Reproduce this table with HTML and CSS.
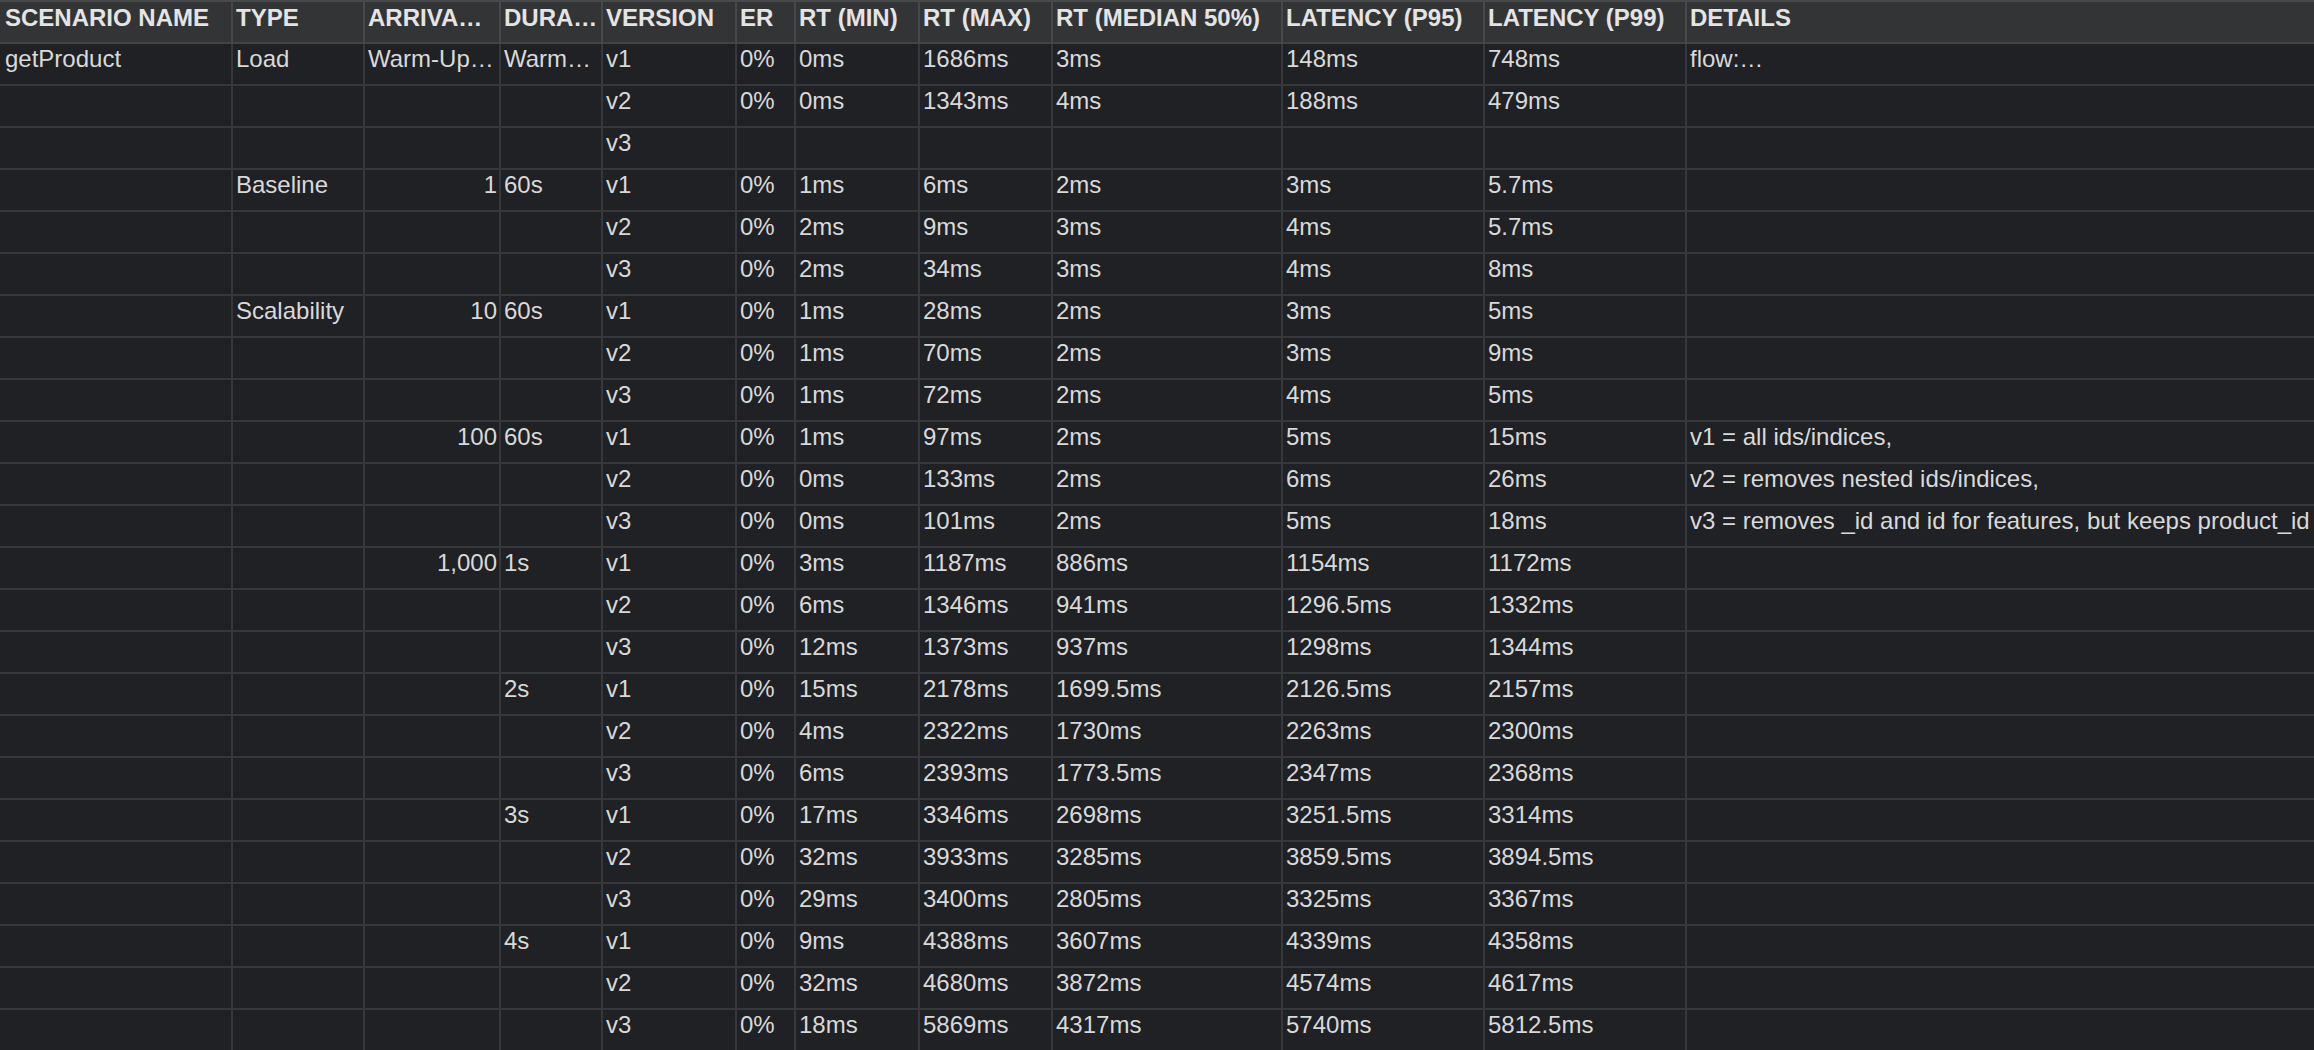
FILE: index.html
```html
<!DOCTYPE html>
<html lang="en">
<head>
<meta charset="utf-8">
<title>Load test results</title>
<link rel="stylesheet" href="styles.css">
</head>
<body>
<div class="sheet" role="table">
  <div class="c h">SCENARIO NAME</div><div class="c h">TYPE</div><div class="c h">ARRIVA…</div><div class="c h">DURA…</div><div class="c h">VERSION</div><div class="c h">ER</div><div class="c h">RT (MIN)</div><div class="c h">RT (MAX)</div><div class="c h">RT (MEDIAN 50%)</div><div class="c h">LATENCY (P95)</div><div class="c h">LATENCY (P99)</div><div class="c h last">DETAILS</div>

  <div class="c">getProduct</div><div class="c">Load</div><div class="c">Warm-Up…</div><div class="c">Warm…</div><div class="c">v1</div><div class="c">0%</div><div class="c">0ms</div><div class="c">1686ms</div><div class="c">3ms</div><div class="c">148ms</div><div class="c">748ms</div><div class="c last">flow:…</div>
  <div class="c"></div><div class="c"></div><div class="c"></div><div class="c"></div><div class="c">v2</div><div class="c">0%</div><div class="c">0ms</div><div class="c">1343ms</div><div class="c">4ms</div><div class="c">188ms</div><div class="c">479ms</div><div class="c last"></div>
  <div class="c"></div><div class="c"></div><div class="c"></div><div class="c"></div><div class="c">v3</div><div class="c"></div><div class="c"></div><div class="c"></div><div class="c"></div><div class="c"></div><div class="c"></div><div class="c last"></div>

  <div class="c"></div><div class="c">Baseline</div><div class="c num">1</div><div class="c">60s</div><div class="c">v1</div><div class="c">0%</div><div class="c">1ms</div><div class="c">6ms</div><div class="c">2ms</div><div class="c">3ms</div><div class="c">5.7ms</div><div class="c last"></div>
  <div class="c"></div><div class="c"></div><div class="c"></div><div class="c"></div><div class="c">v2</div><div class="c">0%</div><div class="c">2ms</div><div class="c">9ms</div><div class="c">3ms</div><div class="c">4ms</div><div class="c">5.7ms</div><div class="c last"></div>
  <div class="c"></div><div class="c"></div><div class="c"></div><div class="c"></div><div class="c">v3</div><div class="c">0%</div><div class="c">2ms</div><div class="c">34ms</div><div class="c">3ms</div><div class="c">4ms</div><div class="c">8ms</div><div class="c last"></div>

  <div class="c"></div><div class="c">Scalability</div><div class="c num">10</div><div class="c">60s</div><div class="c">v1</div><div class="c">0%</div><div class="c">1ms</div><div class="c">28ms</div><div class="c">2ms</div><div class="c">3ms</div><div class="c">5ms</div><div class="c last"></div>
  <div class="c"></div><div class="c"></div><div class="c"></div><div class="c"></div><div class="c">v2</div><div class="c">0%</div><div class="c">1ms</div><div class="c">70ms</div><div class="c">2ms</div><div class="c">3ms</div><div class="c">9ms</div><div class="c last"></div>
  <div class="c"></div><div class="c"></div><div class="c"></div><div class="c"></div><div class="c">v3</div><div class="c">0%</div><div class="c">1ms</div><div class="c">72ms</div><div class="c">2ms</div><div class="c">4ms</div><div class="c">5ms</div><div class="c last"></div>

  <div class="c"></div><div class="c"></div><div class="c num">100</div><div class="c">60s</div><div class="c">v1</div><div class="c">0%</div><div class="c">1ms</div><div class="c">97ms</div><div class="c">2ms</div><div class="c">5ms</div><div class="c">15ms</div><div class="c last">v1 = all ids/indices,</div>
  <div class="c"></div><div class="c"></div><div class="c"></div><div class="c"></div><div class="c">v2</div><div class="c">0%</div><div class="c">0ms</div><div class="c">133ms</div><div class="c">2ms</div><div class="c">6ms</div><div class="c">26ms</div><div class="c last">v2 = removes nested ids/indices,</div>
  <div class="c"></div><div class="c"></div><div class="c"></div><div class="c"></div><div class="c">v3</div><div class="c">0%</div><div class="c">0ms</div><div class="c">101ms</div><div class="c">2ms</div><div class="c">5ms</div><div class="c">18ms</div><div class="c last">v3 = removes _id and id for features, but keeps product_id</div>

  <div class="c"></div><div class="c"></div><div class="c num">1,000</div><div class="c">1s</div><div class="c">v1</div><div class="c">0%</div><div class="c">3ms</div><div class="c">1187ms</div><div class="c">886ms</div><div class="c">1154ms</div><div class="c">1172ms</div><div class="c last"></div>
  <div class="c"></div><div class="c"></div><div class="c"></div><div class="c"></div><div class="c">v2</div><div class="c">0%</div><div class="c">6ms</div><div class="c">1346ms</div><div class="c">941ms</div><div class="c">1296.5ms</div><div class="c">1332ms</div><div class="c last"></div>
  <div class="c"></div><div class="c"></div><div class="c"></div><div class="c"></div><div class="c">v3</div><div class="c">0%</div><div class="c">12ms</div><div class="c">1373ms</div><div class="c">937ms</div><div class="c">1298ms</div><div class="c">1344ms</div><div class="c last"></div>

  <div class="c"></div><div class="c"></div><div class="c"></div><div class="c">2s</div><div class="c">v1</div><div class="c">0%</div><div class="c">15ms</div><div class="c">2178ms</div><div class="c">1699.5ms</div><div class="c">2126.5ms</div><div class="c">2157ms</div><div class="c last"></div>
  <div class="c"></div><div class="c"></div><div class="c"></div><div class="c"></div><div class="c">v2</div><div class="c">0%</div><div class="c">4ms</div><div class="c">2322ms</div><div class="c">1730ms</div><div class="c">2263ms</div><div class="c">2300ms</div><div class="c last"></div>
  <div class="c"></div><div class="c"></div><div class="c"></div><div class="c"></div><div class="c">v3</div><div class="c">0%</div><div class="c">6ms</div><div class="c">2393ms</div><div class="c">1773.5ms</div><div class="c">2347ms</div><div class="c">2368ms</div><div class="c last"></div>

  <div class="c"></div><div class="c"></div><div class="c"></div><div class="c">3s</div><div class="c">v1</div><div class="c">0%</div><div class="c">17ms</div><div class="c">3346ms</div><div class="c">2698ms</div><div class="c">3251.5ms</div><div class="c">3314ms</div><div class="c last"></div>
  <div class="c"></div><div class="c"></div><div class="c"></div><div class="c"></div><div class="c">v2</div><div class="c">0%</div><div class="c">32ms</div><div class="c">3933ms</div><div class="c">3285ms</div><div class="c">3859.5ms</div><div class="c">3894.5ms</div><div class="c last"></div>
  <div class="c"></div><div class="c"></div><div class="c"></div><div class="c"></div><div class="c">v3</div><div class="c">0%</div><div class="c">29ms</div><div class="c">3400ms</div><div class="c">2805ms</div><div class="c">3325ms</div><div class="c">3367ms</div><div class="c last"></div>

  <div class="c"></div><div class="c"></div><div class="c"></div><div class="c">4s</div><div class="c">v1</div><div class="c">0%</div><div class="c">9ms</div><div class="c">4388ms</div><div class="c">3607ms</div><div class="c">4339ms</div><div class="c">4358ms</div><div class="c last"></div>
  <div class="c"></div><div class="c"></div><div class="c"></div><div class="c"></div><div class="c">v2</div><div class="c">0%</div><div class="c">32ms</div><div class="c">4680ms</div><div class="c">3872ms</div><div class="c">4574ms</div><div class="c">4617ms</div><div class="c last"></div>
  <div class="c"></div><div class="c"></div><div class="c"></div><div class="c"></div><div class="c">v3</div><div class="c">0%</div><div class="c">18ms</div><div class="c">5869ms</div><div class="c">4317ms</div><div class="c">5740ms</div><div class="c">5812.5ms</div><div class="c last"></div>
</div>
</body>
</html>
```

FILE: styles.css
```css
html, body {
  margin: 0;
  padding: 0;
  background: #1f2124;
  overflow: hidden;
}

.sheet {
  display: grid;
  grid-template-columns: 233px 132px 136px 102px 134px 59px 124px 133px 230px 202px 202px 1fr;
  grid-template-rows: 44px;
  grid-auto-rows: 42px;
  width: 2314px;
  background: #1f2124;
  font-family: "Liberation Sans", Arial, Helvetica, sans-serif;
  font-size: 24px;
  line-height: 28px;
  color: #d9d9d9;
}

.c {
  box-sizing: border-box;
  border-right: 2px solid #36383b;
  border-bottom: 2px solid #36383b;
  padding: 1px 3px 0 3px;
  white-space: nowrap;
  overflow: hidden;
}

.c:nth-child(12n+1) {
  padding-left: 5px;
}

.h {
  background: #333436;
  border-top: 2px solid #48494b;
  border-bottom-color: #414346;
  border-right-color: #47484a;
  padding-top: 2px;
  font-weight: bold;
  color: #e4e4e4;
}

.num {
  text-align: right;
  padding-right: 2px;
}

.last {
  border-right: none;
}
```
